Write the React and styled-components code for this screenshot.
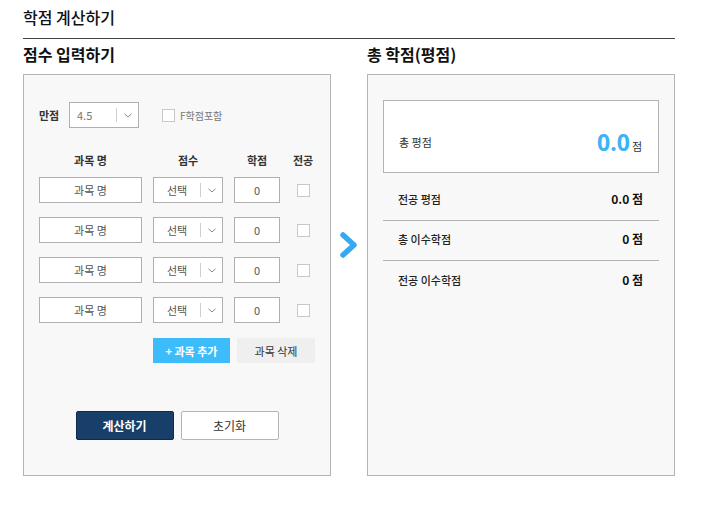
import React from "react";
import styled, { createGlobalStyle } from "styled-components";

const Global = createGlobalStyle`
  html, body { margin: 0; padding: 0; background: #fff; }
  body { font-family: "Noto Sans CJK KR", "Noto Sans", sans-serif; color: #222; }
  * { box-sizing: border-box; }
`;

const Page = styled.div`
  width: 702px;
  padding: 7px 0 0 23px;
`;

const Title = styled.h1`
  width: 652px;
  margin: 0;
  padding-bottom: 11px;
  border-bottom: 1px solid #444;
  font-size: 16px;
  line-height: 20px;
  font-weight: 500;
  color: #111;
`;

const Columns = styled.div`
  display: flex;
  width: 652px;
`;

const Col = styled.section`
  width: 308px;
  display: flex;
  flex-direction: column;
`;

const Heading = styled.h2`
  margin: 5px 0 10px;
  font-size: 16px;
  line-height: 20px;
  font-weight: 700;
  color: #111;
`;

const Panel = styled.div`
  height: 402px;
  border: 1px solid #b4b4b4;
  background: #f8f8f8;
  padding: ${(p) => p.$pad};
`;

const TopRow = styled.div`
  display: flex;
  align-items: center;
  height: 26px;
`;

const Label = styled.span`
  width: 30px;
  font-size: 11px;
  font-weight: 700;
  color: #333;
  line-height: 14px;
`;

const SelectBox = styled.div`
  width: 70px;
  height: 26px;
  border: 1px solid #b0b0b0;
  background: #fff;
  display: flex;
  align-items: center;
`;

const SelectValue = styled.span`
  flex: 1;
  font-size: 11px;
  line-height: 14px;
  color: ${(p) => (p.$left ? "#777" : "#555")};
  text-align: ${(p) => (p.$left ? "left" : "center")};
  padding-left: ${(p) => (p.$left ? "7px" : "0")};
`;

const SelectDivider = styled.span`
  width: 1px;
  height: 14px;
  background: #cfcfcf;
`;

const SelectArrow = styled.span`
  width: 21px;
  display: flex;
  justify-content: center;
  align-items: center;
`;

const Check = styled.span`
  display: inline-block;
  width: 13px;
  height: 13px;
  border: 1px solid #c8c8c8;
  background: #fff;
  margin: ${(p) => p.$m || "0"};
`;

const CheckText = styled.span`
  font-size: 10px;
  line-height: 13px;
  color: #777;
  margin-left: 5px;
`;

const Grid = styled.div`
  display: grid;
  grid-template-columns: 103px 70px 46px 24px;
  column-gap: 11px;
  align-items: center;
  justify-items: center;
  margin-top: ${(p) => p.$mt};
`;

const HeadCell = styled.span`
  font-size: 11px;
  line-height: 14px;
  font-weight: 700;
  color: #333;
`;

const Rows = styled.div`
  display: flex;
  flex-direction: column;
  gap: 14px;
  margin-top: 10px;
`;

const TextInput = styled.input`
  width: ${(p) => p.$w};
  height: 26px;
  border: 1px solid #b0b0b0;
  background: #fff;
  font-family: "Noto Sans CJK KR", "Noto Sans", sans-serif;
  font-size: 11px;
  color: #555;
  text-align: center;
  padding: 0;
  outline: none;
  &::placeholder { color: #555; }
`;

const ActionRow = styled.div`
  display: flex;
  justify-content: ${(p) => p.$justify};
  gap: 7px;
  margin-top: ${(p) => p.$mt};
`;

const SmallButton = styled.button`
  width: ${(p) => p.$w};
  height: 25px;
  border: none;
  padding: 0;
  font-family: "Noto Sans CJK KR", "Noto Sans", sans-serif;
  font-size: 11px;
  font-weight: ${(p) => (p.$primary ? 700 : 400)};
  background: ${(p) => (p.$primary ? "#3dbcfc" : "#efefef")};
  color: ${(p) => (p.$primary ? "#fff" : "#333")};
`;

const BigButton = styled.button`
  width: 98px;
  height: 29px;
  border-radius: 2px;
  padding: 0;
  font-family: "Noto Sans CJK KR", "Noto Sans", sans-serif;
  font-size: 12px;
  font-weight: ${(p) => (p.$primary ? 700 : 400)};
  border: 1px solid ${(p) => (p.$primary ? "#0e2a4a" : "#b4b4b4")};
  background: ${(p) => (p.$primary ? "#173f69" : "#fff")};
  color: ${(p) => (p.$primary ? "#fff" : "#333")};
`;

const Mid = styled.div`
  width: 36px;
  display: flex;
  justify-content: center;
  align-items: flex-start;
  padding-top: 192px;
`;

const TotalBox = styled.div`
  height: 73px;
  border: 1px solid #b4b4b4;
  background: #fff;
  display: flex;
  justify-content: space-between;
  align-items: center;
  padding: 10px 16px 0 15px;
`;

const TotalLabel = styled.span`
  font-size: 11px;
  line-height: 14px;
  color: #333;
`;

const TotalValue = styled.span`
  display: flex;
  align-items: baseline;
`;

const BigNum = styled.span`
  font-family: "Noto Sans", "Liberation Sans", sans-serif;
  font-size: 23px;
  font-weight: 700;
  line-height: 24px;
  color: #3ab4f7;
`;

const Unit = styled.span`
  font-size: 11px;
  line-height: 14px;
  color: #333;
  margin-left: 2px;
`;

const Summary = styled.div`
  margin-top: 8px;
`;

const SumRow = styled.div`
  height: 40px;
  display: flex;
  justify-content: space-between;
  align-items: center;
  padding: 0 16px 3px 15px;
  border-bottom: ${(p) => (p.$last ? "none" : "1px solid #b4b4b4")};
`;

const SumLabel = styled.span`
  font-size: 11px;
  line-height: 14px;
  font-weight: 500;
  color: #222;
`;

const SumValue = styled.span`
  font-size: 12px;
  line-height: 14px;
  font-weight: 700;
  color: #111;
`;

const Chevron = () => (
  <svg width="8" height="5" viewBox="0 0 8 5">
    <polyline points="0.5,0.8 4,4 7.5,0.8" fill="none" stroke="#888" strokeWidth="1" />
  </svg>
);

const Select = ({ value, left }) => (
  <SelectBox>
    <SelectValue $left={left}>{value}</SelectValue>
    <SelectDivider />
    <SelectArrow>
      <Chevron />
    </SelectArrow>
  </SelectBox>
);

export default function App() {
  const rows = [0, 1, 2, 3];
  return (
    <Page>
      <Global />
      <Title>학점 계산하기</Title>
      <Columns>
        <Col>
          <Heading>점수 입력하기</Heading>
          <Panel $pad="27px 15px 0">
            <TopRow>
              <Label>만점</Label>
              <Select value="4.5" left />
              <Check $m="0 0 0 23px" />
              <CheckText>F학점포함</CheckText>
            </TopRow>
            <Grid $mt="25px">
              <HeadCell>과목 명</HeadCell>
              <HeadCell>점수</HeadCell>
              <HeadCell>학점</HeadCell>
              <HeadCell>전공</HeadCell>
            </Grid>
            <Rows>
              {rows.map((r) => (
                <Grid key={r} $mt="0">
                  <TextInput $w="103px" placeholder="과목 명" />
                  <Select value="선택" />
                  <TextInput $w="46px" defaultValue="0" />
                  <Check />
                </Grid>
              ))}
            </Rows>
            <ActionRow $justify="flex-end" $mt="15px">
              <SmallButton $w="77px" $primary>+ 과목 추가</SmallButton>
              <SmallButton $w="78px">과목 삭제</SmallButton>
            </ActionRow>
            <ActionRow $justify="center" $mt="48px">
              <BigButton $primary>계산하기</BigButton>
              <BigButton>초기화</BigButton>
            </ActionRow>
          </Panel>
        </Col>
        <Mid>
          <svg width="20" height="28" viewBox="0 0 20 28">
            <polyline
              points="4,4 15,14 4,24"
              fill="none"
              stroke="#36a9f2"
              strokeWidth="5.5"
              strokeLinecap="round"
              strokeLinejoin="round"
            />
          </svg>
        </Mid>
        <Col>
          <Heading>총 학점(평점)</Heading>
          <Panel $pad="25px 15px">
            <TotalBox>
              <TotalLabel>총 평점</TotalLabel>
              <TotalValue>
                <BigNum>0.0</BigNum>
                <Unit>점</Unit>
              </TotalValue>
            </TotalBox>
            <Summary>
              <SumRow>
                <SumLabel>전공 평점</SumLabel>
                <SumValue>0.0 점</SumValue>
              </SumRow>
              <SumRow>
                <SumLabel>총 이수학점</SumLabel>
                <SumValue>0 점</SumValue>
              </SumRow>
              <SumRow $last>
                <SumLabel>전공 이수학점</SumLabel>
                <SumValue>0 점</SumValue>
              </SumRow>
            </Summary>
          </Panel>
        </Col>
      </Columns>
    </Page>
  );
}
